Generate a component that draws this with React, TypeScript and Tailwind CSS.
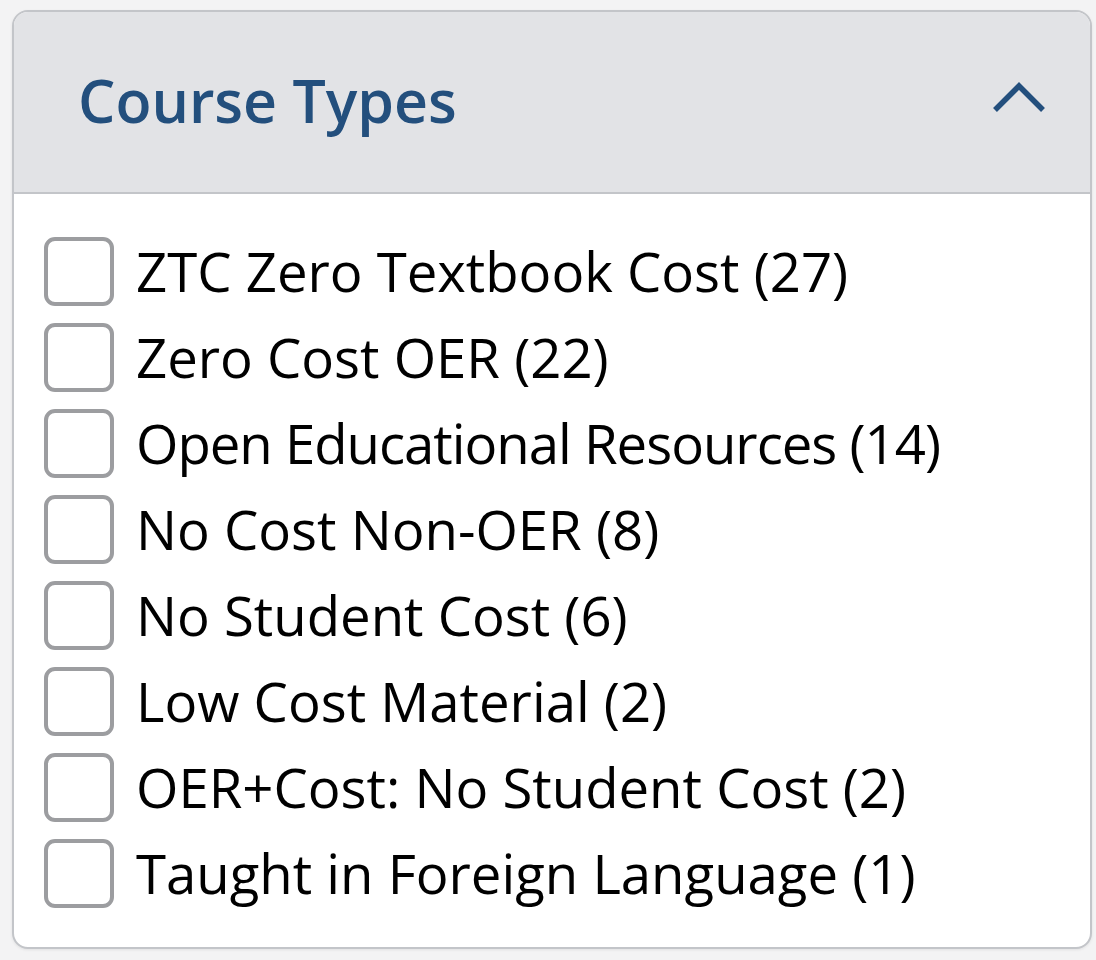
import React from "react";

const items: { t: string; c?: string }[] = [
  { t: "ZTC Zero Textbook Cost (27)" },
  { t: "Zero Cost OER (22)" },
  { t: "Open Educational Resources (14)", c: "tracking-[-1px]" },
  { t: "No Cost Non-OER (8)" },
  { t: "No Student Cost (6)" },
  { t: "Low Cost Material (2)" },
  { t: "OER+Cost: No Student Cost (2)" },
  { t: "Taught in Foreign Language (1)" },
];

export default function App() {
  return (
    <div
      className="w-[1096px] h-[960px] bg-[#f3f3f4] pt-[10px] pl-[12px]"
      style={{ fontFamily: '"Open Sans", "Noto Sans", sans-serif' }}
    >
      <div className="w-[1080px] h-[939px] rounded-[16px] border-2 border-[#c3c5c9] bg-white overflow-hidden flex flex-col shadow-[0_1px_3px_rgba(0,0,0,0.08)]">
        <div className="h-[182px] shrink-0 bg-[#e2e3e6] border-b-2 border-[#c3c5c9] flex items-center justify-between pl-[64px] pr-[44px]">
          <span className="text-[59px] font-semibold text-[#234f7d] leading-none -mt-[4px]">Course Types</span>
          <svg width="54" height="34" viewBox="0 0 54 34" className="-mt-[10px]">
            <path d="M3 30 L27 6 L51 30" fill="none" stroke="#234f7d" strokeWidth="5.5" />
          </svg>
        </div>
        <div className="flex flex-col gap-[17px] pl-[30px] pt-[43px]">
          {items.map((it) => (
            <div key={it.t} className="flex items-center gap-[22px] h-[69px]">
              <div className="w-[70px] h-[69px] rounded-[11px] border-[4px] border-[#9c9da0] bg-white shrink-0" />
              <span className={`text-[54.5px] text-black leading-none whitespace-nowrap ${it.c ?? ""}`}>{it.t}</span>
            </div>
          ))}
        </div>
      </div>
    </div>
  );
}
